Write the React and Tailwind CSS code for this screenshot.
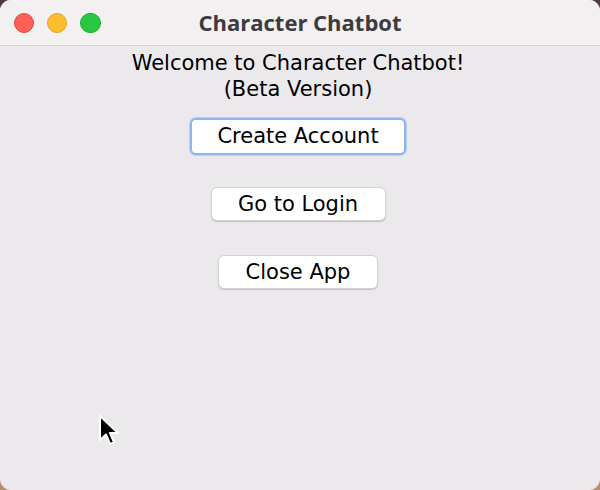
import React from "react";

const font = { fontFamily: '"DejaVu Sans", "Liberation Sans", sans-serif' };

function TrafficLights() {
    return (
        <div className="flex items-center gap-[13px] pl-[14px]">
            <span className="w-[20px] h-[20px] rounded-full bg-[#fe5f57] border border-[#e14640]" />
            <span className="w-[20px] h-[20px] rounded-full bg-[#febc2e] border border-[#dea123]" />
            <span className="w-[21px] h-[20px] rounded-full bg-[#28c840] border border-[#1aab29]" />
        </div>
    );
}

function MacButton({ children, focused, width }) {
    return (
        <button
            className={`h-[34px] ${width} rounded-[6px] bg-white text-[21px] text-black leading-none flex items-center justify-center ${
                focused
                    ? "border-2 border-[#8fb5ee] shadow-[0_0_0_1px_#b7cff3]"
                    : "border border-[#d2d0d3] shadow-[0_1px_1px_rgba(0,0,0,0.18)]"
            }`}
            style={font}
        >
            {children}
        </button>
    );
}

export default function App() {
    return (
        <div className="w-[600px] h-[490px] bg-gradient-to-b from-[#4e3a40] to-[#b48d6c] overflow-hidden">
            <div className="relative w-full h-full rounded-[11px] overflow-hidden bg-[#ebe9ec] flex flex-col">
                {/* title bar */}
                <div className="relative h-[46px] bg-[#f2f0f1] border-b border-[#d4d2d4] flex items-center">
                    <TrafficLights />
                    <div
                        className="absolute inset-0 flex items-center justify-center text-[22px] font-bold text-[#3d3b3d]"
                        style={{ fontFamily: '"Open Sans", "Liberation Sans", sans-serif' }}
                    >
                        Character Chatbot
                    </div>
                </div>

                {/* content */}
                <div className="flex flex-col items-center pt-[4px] pr-[4px]">
                    <p className="text-[21px] leading-[26px] text-black text-center" style={font}>
                        Welcome to Character Chatbot!
                        <br />
                        (Beta Version)
                    </p>
                    <div className="mt-[16px]">
                        <MacButton focused width="w-[216px] h-[37px]">Create Account</MacButton>
                    </div>
                    <div className="mt-[32px]">
                        <MacButton width="w-[175px]">Go to Login</MacButton>
                    </div>
                    <div className="mt-[34px]">
                        <MacButton width="w-[160px]">Close App</MacButton>
                    </div>
                </div>

                {/* mouse pointer */}
                <svg
                    className="absolute left-[97px] top-[414px]"
                    width="24"
                    height="34"
                    viewBox="0 0 24 34"
                >
                    <path
                        d="M3 2 L3 26 L9 20.5 L13 30 L17 28.3 L13 19 L21 19 Z"
                        fill="#000"
                        stroke="#fff"
                        strokeWidth="2"
                        strokeLinejoin="round"
                    />
                </svg>
            </div>
        </div>
    );
}
